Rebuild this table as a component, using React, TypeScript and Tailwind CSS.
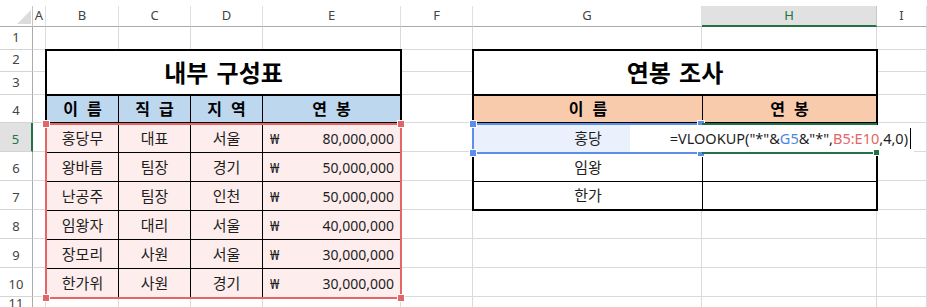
const font = '"Noto Sans", "Noto Sans CJK KR", sans-serif';

const letters = ["A", "B", "C", "D", "E", "F", "G", "H", "I"];

const staff = [
  { name: "홍당무", rank: "대표", area: "서울", pay: "80,000,000" },
  { name: "왕바름", rank: "팀장", area: "경기", pay: "50,000,000" },
  { name: "난공주", rank: "팀장", area: "인천", pay: "50,000,000" },
  { name: "임왕자", rank: "대리", area: "서울", pay: "40,000,000" },
  { name: "장모리", rank: "사원", area: "서울", pay: "30,000,000" },
  { name: "한가위", rank: "사원", area: "경기", pay: "30,000,000" },
];

const lookups = ["홍당", "임왕", "한가"];

// same track sizes for the gridline layer and the content layer
const tracks =
  "grid grid-cols-[33px_13px_73px_72px_72px_138px_72px_229px_175px_1fr] grid-rows-[27px_23px_22px_23px_28px_29px_29px_29px_29px_29px_29px_1fr]";

function Gridlines() {
  const cells = [];

  cells.push(
    <div
      key="corner"
      className="mt-[6px] flex items-end justify-end pr-[1px] pb-[2px] border-r border-b border-r-[#c4c4c4] border-b-[#ababab] bg-white"
    >
      <svg width="14" height="14" viewBox="0 0 14 14">
        <polygon points="14,0 14,14 0,14" fill="#dcdcdc" />
      </svg>
    </div>
  );
  letters.forEach((l) => {
    const active = l === "H";
    cells.push(
      <div
        key={"h" + l}
        className={
          active
            ? "mt-[6px] flex items-center justify-center text-[13px] text-[#217346] bg-[#e1e1e1] border-r border-r-[#c8c8c8] border-b-2 border-b-[#217346]"
            : "mt-[6px] flex items-center justify-center text-[13px] text-[#444] bg-white border-r border-r-[#e0e0e0] border-b border-b-[#ababab]"
        }
      >
        {l}
      </div>
    );
  });

  for (let r = 1; r <= 11; r++) {
    const active = r === 5;
    cells.push(
      <div
        key={"r" + r}
        className={
          active
            ? "flex items-end justify-center pb-[5px] leading-none text-[13px] text-[#217346] bg-[#e1e1e1] border-r-2 border-r-[#217346] border-b border-b-[#d4d4d4]"
            : "flex items-end justify-center pb-[5px] leading-none text-[13px] text-[#444] bg-white border-r border-r-[#ababab] border-b border-b-[#d4d4d4]"
        }
      >
        {r}
      </div>
    );
    letters.forEach((l) => {
      cells.push(
        <div key={l + r} className="bg-white border-r border-b border-[#dadada]" />
      );
    });
  }

  return <div className={"[grid-area:1/1] " + tracks}>{cells}</div>;
}

function Content() {
  return (
    <div className={"relative [grid-area:1/1] pointer-events-none " + tracks}>
      {/* 내부 구성표 B2:E10 */}
      <div className="col-start-3 col-end-7 row-start-3 row-end-12 self-start -ml-px -mt-px -mr-px flex flex-col border-2 border-black bg-white text-[#1e1e1e]">
        <div className="h-[45px] flex items-center justify-center border-b-2 border-black text-[24px] font-bold text-black [word-spacing:2px]">
          내부 구성표
        </div>
        <div className="h-[28px] grid grid-cols-[72px_72px_72px_1fr] border-b-2 border-black bg-[#bdd7ee] text-[16px] font-bold text-black [word-spacing:5px]">
          <div className="flex items-center justify-center border-r border-black">이 름</div>
          <div className="flex items-center justify-center border-r border-black">직 급</div>
          <div className="flex items-center justify-center border-r border-black">지 역</div>
          <div className="flex items-center justify-center">연 봉</div>
        </div>
        {staff.map((s, i) => (
          <div
            key={s.name}
            className={
              i < staff.length - 1
                ? "h-[29px] grid grid-cols-[72px_72px_72px_1fr] border-b border-black bg-[#fdeded] text-[15px]"
                : "h-[28px] grid grid-cols-[72px_72px_72px_1fr] bg-[#fdeded] text-[15px]"
            }
          >
            <div className="flex items-center justify-center border-r border-black">{s.name}</div>
            <div className="flex items-center justify-center border-r border-black">{s.rank}</div>
            <div className="flex items-center justify-center border-r border-black">{s.area}</div>
            <div className="flex items-center justify-between pl-[7px] pr-[6px] text-[14px]">
              <span>₩</span>
              <span>{s.pay}</span>
            </div>
          </div>
        ))}
      </div>

      {/* 연봉 조사 G2:H7 */}
      <div className="col-start-8 col-end-10 row-start-3 row-end-9 self-start -ml-px -mt-px -mr-px flex flex-col border-2 border-black bg-white text-[#1e1e1e]">
        <div className="h-[45px] flex items-center justify-center border-b-2 border-black text-[24px] font-bold text-black [word-spacing:2px]">
          연봉 조사
        </div>
        <div className="h-[28px] grid grid-cols-[229px_1fr] border-b-2 border-black bg-[#f8cbad] text-[16px] font-bold text-black [word-spacing:5px]">
          <div className="flex items-center justify-center border-r border-black">이 름</div>
          <div className="flex items-center justify-center">연 봉</div>
        </div>
        {lookups.map((n, i) => (
          <div
            key={n}
            className={
              i < lookups.length - 1
                ? "h-[29px] grid grid-cols-[229px_1fr] border-b border-black text-[15px]"
                : "h-[27px] grid grid-cols-[229px_1fr] text-[15px]"
            }
          >
            <div
              className={
                i === 0
                  ? "flex items-center justify-center border-r border-black bg-[#ebf1fc]"
                  : "flex items-center justify-center border-r border-black"
              }
            >
              {n}
            </div>
            <div />
          </div>
        ))}
      </div>

      {/* selection B5:E10 */}
      <div className="relative col-start-3 col-end-7 row-start-6 row-end-12 -ml-px -mr-px -mb-[2px] border-2 border-[#e46565]">
        <div className="absolute -left-[4px] -top-[4px] w-[6px] h-[6px] bg-[#e46565] outline outline-1 outline-white" />
        <div className="absolute -right-[4px] -top-[4px] w-[6px] h-[6px] bg-[#e46565] outline outline-1 outline-white" />
        <div className="absolute -left-[4px] -bottom-[4px] w-[6px] h-[6px] bg-[#e46565] outline outline-1 outline-white" />
        <div className="absolute -right-[4px] -bottom-[4px] w-[6px] h-[6px] bg-[#e46565] outline outline-1 outline-white" />
      </div>

      {/* selection G5 */}
      <div className="relative col-start-8 col-end-9 row-start-6 row-end-7 -ml-px -mb-[2px] border-2 border-[#5b8fe8]">
        <div className="absolute -left-[4px] -top-[4px] w-[6px] h-[6px] bg-[#5b8fe8] outline outline-1 outline-white" />
        <div className="absolute -right-[4px] -top-[4px] w-[6px] h-[6px] bg-[#5b8fe8] outline outline-1 outline-white" />
        <div className="absolute -left-[4px] -bottom-[4px] w-[6px] h-[6px] bg-[#5b8fe8] outline outline-1 outline-white" />
        <div className="absolute -right-[4px] -bottom-[4px] w-[6px] h-[6px] bg-[#5b8fe8] outline outline-1 outline-white" />
      </div>

      {/* active cell H5 */}
      <div className="relative col-start-9 col-end-10 row-start-6 row-end-7 -mb-[2px] border-y-2 border-r-2 border-[#217346]" />

      {/* in-cell formula editor */}
      <div className="absolute left-[630px] top-[125px] w-[284px] h-[27px] flex items-center justify-end pr-[3px] bg-white text-[14.5px] text-[#1e1e1e] whitespace-nowrap">
        <span>=VLOOKUP("*"&amp;</span>
        <span className="text-[#4f86e0]">G5</span>
        <span>&amp;"*",</span>
        <span className="text-[#e46565]">B5:E10</span>
        <span>,4,0)</span>
        <span className="ml-[2px] w-px h-[21px] bg-black" />
      </div>
      <div className="absolute left-[874px] top-[150px] w-[5px] h-[5px] bg-[#217346] outline outline-1 outline-white" />
    </div>
  );
}

export default function App() {
  return (
    <div
      className="grid h-[307px] w-[927px] overflow-hidden bg-white"
      style={{ fontFamily: font }}
    >
      <Gridlines />
      <Content />
    </div>
  );
}
